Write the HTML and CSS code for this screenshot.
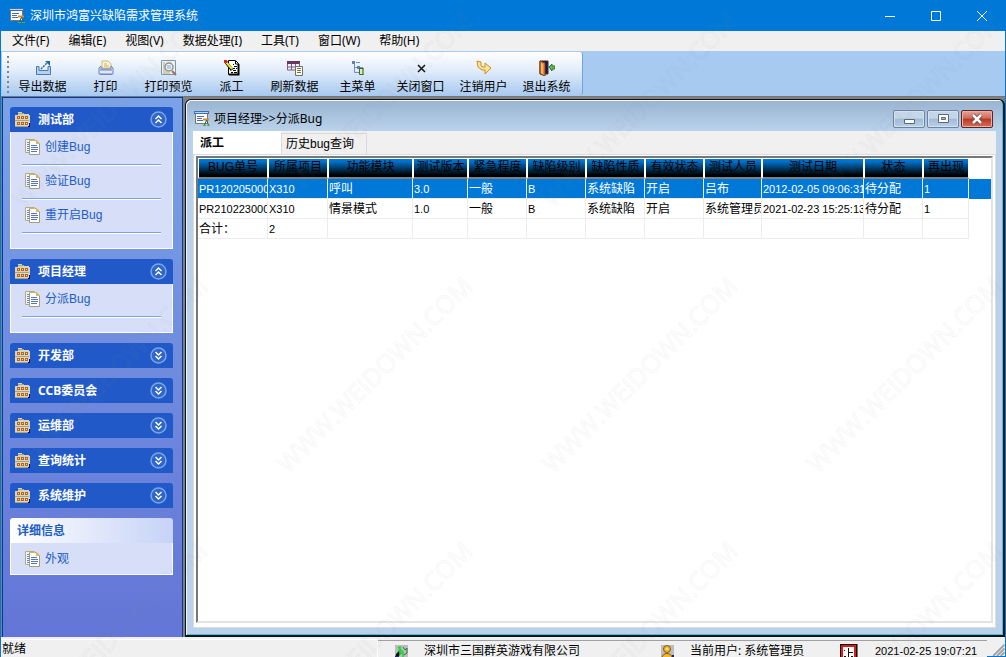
FILE: index.html
```html
<!DOCTYPE html>
<html lang="zh-CN">
<head>
<meta charset="utf-8">
<title>深圳市鸿富兴缺陷需求管理系统</title>
<link rel="stylesheet" href="styles.css">
</head>
<body>
<svg class="defs" aria-hidden="true">
  <symbol id="app" viewBox="0 0 16 16"><path d="M1.500 1.500h12v11h-12z" fill="#fff" stroke="#77786a"/><path d="M0 0h15v3H0z" fill="#3d6fb5"/><path d="M1 1.500h13" stroke="#b9d7f5"/><path d="M3 5.500h7M3 7.500h5M3 9.500h6" stroke="#4b6da3"/><path d="M9 8.500h6" stroke="#e08a2c" stroke-width="2"/><path d="M12.500 9l-2 5M12.500 9l2 5" stroke="#27666b"/><path d="M9 14.500h3M13 14.500h3" stroke="#60b030"/></symbol>
  <symbol id="building" viewBox="0 0 16 16"><path d="M3 0h4v2h2v0h5v1h1v12H0V3h3z" fill="#d9d5bb"/><path d="M3 1h6v1H3zM0 8h14v1H0zM0 14h14v1H0z" fill="#a9a58b"/><path d="M2 4h3v3H2zM6 4h3v3H6zM10 4h3v3h-3zM2 10h3v3H2zM6 10h3v3H6zM10 10h3v3h-3z" fill="#b9622c"/><path d="M3 5h1v1H3zM7 5h1v1H7zM11 5h1v1h-1zM3 11h1v1H3zM7 11h1v1H7zM11 11h1v1h-1z" fill="#ffe14a"/><path d="M14 11h1v4h-2v-1h1z" fill="#08086e"/></symbol>
  <symbol id="page" viewBox="0 0 16 16"><path d="M.5 13.500V.5h9l1 1v12z" fill="#eef3ff" stroke="#b9ab76"/><path d="M2 3.500h2M2 5.500h2M2 7.500h2M2 9.500h2M2 11.500h2" stroke="#6d89be"/><path d="M4.500 15.500v-14h7l3 3v11z" fill="#fff" stroke="#a09c88"/><path d="M4.500 1.500h6.500l3.500 3.500" fill="none" stroke="#cdb365"/><path d="M11 1v4h4z" fill="#e4b660"/><path d="M6 6.500h6M6 8.500h7M6 10.500h7M6 12.500h6" stroke="#5577b5"/></symbol>
  <symbol id="up" viewBox="0 0 17 17"><circle cx="8.500" cy="8.500" r="7.500" fill="#2f65cc" stroke="#7ba6e6" stroke-width="1.500"/><path d="M5.500 8l3-3 3 3M5.500 12l3-3 3 3" fill="none" stroke="#fff" stroke-width="1.500"/></symbol>
  <symbol id="down" viewBox="0 0 17 17"><circle cx="8.500" cy="8.500" r="7.500" fill="#2f65cc" stroke="#7ba6e6" stroke-width="1.500"/><path d="M5.500 5l3 3 3-3M5.500 9l3 3 3-3" fill="none" stroke="#fff" stroke-width="1.500"/></symbol>
</svg>

<header class="titlebar">
  <svg class="ic16"><use href="#app"/></svg>
  <h1 class="title">深圳市鸿富兴缺陷需求管理系统</h1>
  <div class="caption">
    <button class="cap-btn" aria-label="最小化"><svg class="ic10" viewBox="0 0 10 10"><path d="M0 5.500h10"/></svg></button>
    <button class="cap-btn" aria-label="最大化"><svg class="ic10" viewBox="0 0 10 10"><path d="M.5.5h9v9h-9z"/></svg></button>
    <button class="cap-btn" aria-label="关闭"><svg class="ic10" viewBox="0 0 10 10"><path d="M0 0l10 10M10 0L0 10"/></svg></button>
  </div>
</header>

<nav class="menubar">
  <button>文件(F)</button><button>编辑(E)</button><button>视图(V)</button><button>数据处理(I)</button><button>工具(T)</button><button>窗口(W)</button><button>帮助(H)</button>
</nav>

<div class="toolstrip">
  <div class="toolbar">
    <span class="grip"></span>
    <button><svg class="ic16" viewBox="0 0 16 16"><path d="M3 6.500H1.500v8h14v-8H13v4H4v-4z" fill="#b4d2ee" stroke="#4f78ae"/><path d="M6 9l7-7" stroke="#2b6a9d" stroke-width="1.500" stroke-dasharray="2 1"/><path d="M10 1h5v5z" fill="#23689b"/></svg>导出数据</button>
    <button><svg class="ic16" viewBox="0 0 16 16"><path d="M4 8V1h6l3 3v4z" fill="#fff3d2" stroke="#d3b878"/><path d="M6 4h3M6 6h5" stroke="#c9b27c"/><path d="M1 8l2-2v3h10V6l2 2v6H1z" fill="#dce7f8" stroke="#6f85b8"/><path d="M2 10h12M2 14.500h12" stroke="#7187bd"/></svg>打印</button>
    <button><svg class="ic16" viewBox="0 0 16 16"><path d="M.5.5h14v14H.5z" fill="#eaf1f4" stroke="#7b98a8"/><path d="M2 3h2M2 5h2M2 7h2M2 9h2M2 11h5M2 13h7" stroke="#b8aa80"/><circle cx="8" cy="7" r="4" fill="#e8f4fc" stroke="#98917e" stroke-width="1.500"/><path d="M6 6h4M6 8h4" stroke="#7ea7d4"/><path d="M11 11l4 4" stroke="#b06a5a" stroke-width="2"/></svg>打印预览</button>
    <button><svg class="ic16" viewBox="0 0 16 16"><path d="M4.500.5h7l3 3v11h-10z" fill="#fff" stroke="#000"/><path d="M14.500 4v10.500H5" stroke="#000" stroke-width="2"/><path d="M11.500 1v3h3M9 4.500h1M10 6.500h3M9 8.500h2M12 8.500h1M9 10.500h3M7 12.500h2M10 12.500h3" stroke="#000"/><path d="M2 2l6 8" stroke="#000" stroke-width="3"/><path d="M2 2l6 7" stroke="#f6e51a" stroke-width="2"/><path d="M0 0h3v3H0z" fill="#e11b1b"/></svg>派工</button>
    <button><svg class="ic16" viewBox="0 0 16 16"><path d="M0 1h13v3H0z" fill="#633a5b"/><path d="M.5 4v6H8M12.500 3v4M.5 7h11M4.500 4v6M8.500 4v6" fill="none" stroke="#875b7d"/><path d="M8.500 6.500h7v9h-7z" fill="#fffde8" stroke="#6d7462"/><path d="M10 8.500h4M10 10.500h4M10 12.500h4" stroke="#6d7462"/></svg>刷新数据</button>
    <button><svg class="ic16" viewBox="0 0 16 16"><path d="M4.500 4v8.500H10M5 7.500h4M6 2.500h4M10 7.500h3" fill="none" stroke="#6f8fbd"/><path d="M2.500 1.500h2v2h-2zM7.500 6.500h2v2h-2z" fill="#7397ca" stroke="#52719c"/><path d="M9.500 8.500h4v6h-4z" fill="#dcecc0" stroke="#47623c"/><path d="M12 9h2v5h-2z" fill="#79ac5a"/></svg>主菜单</button>
    <button><svg class="ic16" viewBox="0 0 16 16"><path d="M5 5l7 7M12 5l-7 7" stroke="#111" stroke-width="1.500"/></svg>关闭窗口</button>
    <button><svg class="ic16" viewBox="0 0 16 16"><path d="M1 1l4 1v4l2 1h2V3l6 5-6 6v-4H6L2 7z" fill="#ffe391" stroke="#c98e2d"/></svg>注销用户</button>
    <button><svg class="ic16" viewBox="0 0 16 16"><path d="M1 1h8v13H1z" fill="#101560" stroke="#4c2811"/><path d="M1 1l5 2v13l-5-2z" fill="#e38b3b" stroke="#7f3b13"/><path d="M2 3l2 1v10l-2-1z" fill="#f8b05f"/><path d="M10 7l3-3v2h3v3h-3v2z" fill="#63bb4c" stroke="#28752b"/></svg>退出系统</button>
  </div>
</div>

<main class="work">
  <aside class="side">
    <section class="panel">
      <button class="head"><svg class="ic16"><use href="#building"/></svg><span>测试部</span><svg class="ic17"><use href="#up"/></svg></button>
      <div class="list"><a href="#create"><svg class="ic16"><use href="#page"/></svg>创建Bug</a><a href="#verify"><svg class="ic16"><use href="#page"/></svg>验证Bug</a><a href="#reopen"><svg class="ic16"><use href="#page"/></svg>重开启Bug</a></div>
    </section>
    <section class="panel">
      <button class="head"><svg class="ic16"><use href="#building"/></svg><span>项目经理</span><svg class="ic17"><use href="#up"/></svg></button>
      <div class="list"><a href="#assign"><svg class="ic16"><use href="#page"/></svg>分派Bug</a></div>
    </section>
    <button class="head"><svg class="ic16"><use href="#building"/></svg><span>开发部</span><svg class="ic17"><use href="#down"/></svg></button>
    <button class="head"><svg class="ic16"><use href="#building"/></svg><span>CCB委员会</span><svg class="ic17"><use href="#down"/></svg></button>
    <button class="head"><svg class="ic16"><use href="#building"/></svg><span>运维部</span><svg class="ic17"><use href="#down"/></svg></button>
    <button class="head"><svg class="ic16"><use href="#building"/></svg><span>查询统计</span><svg class="ic17"><use href="#down"/></svg></button>
    <button class="head"><svg class="ic16"><use href="#building"/></svg><span>系统维护</span><svg class="ic17"><use href="#down"/></svg></button>
    <section class="panel info">
      <h2 class="head light">详细信息</h2>
      <div class="list"><a href="#look"><svg class="ic16"><use href="#page"/></svg>外观</a></div>
    </section>
  </aside>

  <section class="child">
    <header class="child-title">
      <svg class="ic16"><use href="#app"/></svg>
      <h2 class="title">项目经理&gt;&gt;分派Bug</h2>
      <div class="child-caption">
        <button aria-label="最小化"><svg class="ic16" viewBox="0 0 16 16"><path d="M3.500 8.500h10v4h-10z" fill="#fff" stroke="#59697c"/></svg></button>
        <button aria-label="还原"><svg class="ic16" viewBox="0 0 16 16"><path d="M3.500 3.500h10v8h-10z" fill="#fff" stroke="#59697c"/><path d="M6.500 6.500h4v2h-4z" fill="#aac3df" stroke="#59697c"/></svg></button>
        <button class="close" aria-label="关闭"><svg class="ic16" viewBox="0 0 16 16"><path d="M4 4l8 8M12 4l-8 8" stroke="#5c3b40" stroke-width="4"/><path d="M4 4l8 8M12 4l-8 8" stroke="#fff" stroke-width="2.500"/></svg></button>
      </div>
    </header>
    <div class="client">
      <div class="tabs" role="tablist">
        <button class="tab active" role="tab" aria-selected="true">派工</button>
        <button class="tab" role="tab" aria-selected="false">历史bug查询</button>
      </div>
      <div class="sheet">
        <div class="grid">
          <table>
            <colgroup><col class="w70"><col class="w60"><col class="w85"><col class="w55"><col class="w59"><col class="w59"><col class="w59"><col class="w59"><col class="w58"><col class="w102"><col class="w59"><col class="w46"><col></colgroup>
            <thead><tr><th>BUG单号</th><th>所属项目</th><th>功能模块</th><th>测试版本</th><th>紧急程度</th><th>缺陷级别</th><th>缺陷性质</th><th>有效状态</th><th>测试人员</th><th>测试日期</th><th>状态</th><th>再出现</th><td></td></tr></thead>
            <tbody>
              <tr class="selected"><td>PR120205000</td><td>X310</td><td>呼叫</td><td>3.0</td><td>一般</td><td>B</td><td>系统缺陷</td><td>开启</td><td>吕布</td><td>2012-02-05 09:06:31</td><td>待分配</td><td>1</td><td></td></tr>
              <tr><td>PR210223000</td><td>X310</td><td>情景模式</td><td>1.0</td><td>一般</td><td>B</td><td>系统缺陷</td><td>开启</td><td>系统管理员</td><td>2021-02-23 15:25:13</td><td>待分配</td><td>1</td><td></td></tr>
              <tr><td>合计：</td><td>2</td><td></td><td></td><td></td><td></td><td></td><td></td><td></td><td></td><td></td><td></td><td></td></tr>
            </tbody>
          </table>
        </div>
      </div>
    </div>
  </section>
</main>

<footer class="status">
  <div class="ready">就绪</div>
  <div class="cell company"><svg class="ic16" viewBox="0 0 16 16"><path d="M1 1h13v15H1z" fill="#bdbdbd"/><path d="M2 10l3-3 2 2-4 6H1z" fill="#111"/><path d="M4 3l5 5v6M6 2v9M4 6l6 5" stroke="#20d33a" stroke-width="1.500" fill="none"/><path d="M9 3l2 3 2-2v5l-3 2" stroke="#2b7048" fill="none"/><path d="M1 12h4v3H1z" fill="#152b73"/></svg>深圳市三国群英游戏有限公司</div>
  <div class="cell user"><svg class="ic16" viewBox="0 0 16 16"><path d="M1 1h13v15H1z" fill="#bdbdbd"/><circle cx="7" cy="5" r="3.500" fill="#f5b72e" stroke="#8a5710"/><path d="M2 14c0-6 10-6 10 0z" fill="#f5b72e" stroke="#8a5710"/><path d="M6 4h2v2H6z" fill="#fff1a0"/><path d="M12 11h2v5h-2z" fill="#1c2068"/></svg>当前用户: 系统管理员</div>
  <div class="cell clock"><svg class="ic18" viewBox="0 0 18 16"><path d="M0 0h18v16H0z" fill="#777"/><path d="M0 0h17v16H0z" fill="#111"/><path d="M2 2h13v13H2z" fill="#fff" stroke="#e01818" stroke-width="2"/><path d="M8.500 4v9M8 8.500h5M4 6.500h1M4 12.500h2M11 12.500h2" stroke="#111"/></svg>2021-02-25 19:07:21</div>
  <svg class="resize" viewBox="0 0 18 16"><path d="M6 16L18 4M10 16l8-8M14 16l4-4" stroke="#a2a2a2" stroke-width="2"/></svg>
</footer>

<svg class="watermark" aria-hidden="true">
  <defs><pattern id="wm" x="242" y="242" width="265" height="265" patternUnits="userSpaceOnUse"><text class="wm-text" x="132" y="142" text-anchor="middle" transform="rotate(-45 132 132)">WWW.WEIDOWN.COM</text></pattern></defs>
  <rect width="100%" height="100%" fill="url(#wm)"/>
</svg>
</body>
</html>
```
FILE: styles.css
```css
* { box-sizing: border-box; }
body {
  margin: 0;
  height: 100vh;
  display: flex;
  flex-direction: column;
  overflow: hidden;
  border-left: 1px solid #0078d7;
  border-right: 1px solid #0078d7;
  background: #f0f0f0;
  color: #000;
  font: 12px/16px "Noto Sans", "Noto Sans CJK SC", sans-serif;
}
button {
  margin: 0;
  padding: 0;
  border: 0;
  background: none;
  color: inherit;
  font: inherit;
  white-space: nowrap;
}
h1, h2 { margin: 0; font-size: 12px; font-weight: 400; }
a { color: inherit; text-decoration: none; }
svg { flex: none; fill: none; }
.defs { position: absolute; width: 0; height: 0; }
.ic10 { width: 10px; height: 10px; stroke: #fff; }
.ic16 { width: 16px; height: 16px; }
.ic17 { width: 17px; height: 17px; }
.ic18 { width: 18px; height: 16px; }

.titlebar {
  flex: none;
  display: flex;
  align-items: center;
  gap: 5px;
  height: 31px;
  padding-left: 8px;
  background: #0078d7;
  color: #fff;
}
.title { flex: 1; white-space: nowrap; }
.caption { display: flex; height: 100%; }
.cap-btn { width: 46px; display: grid; place-items: center; }

.menubar {
  flex: none;
  display: flex;
  gap: 19px;
  height: 20px;
  padding-left: 11px;
}

.toolstrip {
  flex: none;
  height: 45px;
  display: flex;
  padding: 1px 0 1px 1px;
  background: #a6caf0;
}
.toolbar {
  display: flex;
  padding: 0 4px 0 5px;
  border-right: 1px solid #6fa5df;
  border-radius: 0 3px 3px 0;
  background: linear-gradient(#fff, #e4eefb 40%, #a9caf0);
}
.toolbar button {
  width: 63px;
  padding-top: 8px;
  display: flex;
  flex-direction: column;
  align-items: center;
  gap: 3px;
}
.grip {
  width: 2px;
  margin: 4px 2px 2px 0;
  background: repeating-linear-gradient(#858585 0 2px, transparent 2px 5px);
}

.work {
  flex: 1;
  min-height: 0;
  display: flex;
  gap: 2px;
  padding-left: 1px;
  border-top: 1px solid #777;
  background: #808080;
}
.side {
  flex: none;
  width: 181px;
  display: flex;
  flex-direction: column;
  gap: 10px;
  padding: 9px 9px 0 7px;
  border: 1px solid #003c9d;
  border-bottom: 0;
  background: linear-gradient(#7ba2e7, #6375d6);
}
.head {
  flex: none;
  display: flex;
  align-items: center;
  gap: 6px;
  width: 100%;
  height: 25px;
  padding: 0 6px 0 5px;
  border-radius: 3px 3px 0 0;
  background: #215ac8;
  color: #fff;
  font-size: 12px;
  font-weight: 700;
  text-align: left;
}
.head span { flex: 1; padding-left: 1px; }
.light { padding-left: 7px; background: linear-gradient(90deg, #fff, #c6d3f7); color: #215dc6; }
.list {
  padding: 0 11px 14px;
  border: 1px solid #fff;
  border-top: 0;
  background: #d6dff7;
  font-family: "Liberation Sans", "Noto Sans CJK SC", sans-serif;
}
.list a {
  display: flex;
  align-items: center;
  gap: 4px;
  height: 34px;
  padding: 0 3px 4px;
  border-bottom: 1px solid #fff;
  box-shadow: inset 0 -1px #7ba2e7;
  color: #215dc6;
}
.info .list { padding-bottom: 0; }
.info .list a { height: 31px; padding-bottom: 0; border: 0; box-shadow: none; }

.child {
  flex: 1;
  min-width: 0;
  display: flex;
  flex-direction: column;
  margin-top: 2px;
  padding: 0 7px 7px;
  border: 1px solid #111;
  border-width: 1px 2px 2px 1px;
  border-radius: 6px 6px 0 0;
  background: linear-gradient(#99b4d1, #b9d1ea 30px, #b9d1ea);
  box-shadow: inset 1px 1px #f4f8fc, inset -1px -1px #35c5e8;
}
.child-title {
  flex: none;
  display: flex;
  align-items: center;
  gap: 4px;
  height: 31px;
  padding: 6px 3px 0 1px;
}
.child-caption { display: flex; gap: 2px; }
.child-caption button {
  display: grid;
  place-items: center;
  width: 32px;
  height: 18px;
  border: 1px solid #6f839d;
  border-radius: 2px;
  background: linear-gradient(#c5d6e9 45%, #a2bad5 50%, #b8d0ea);
  box-shadow: inset 0 0 0 1px #d3e1f0;
}
.child-caption .close {
  border-color: #5f2229;
  background: linear-gradient(#e5a598, #cf6a56 45%, #b93722 50%, #d5705a);
  box-shadow: inset 0 0 0 1px #e7b0a5;
}
.client { flex: 1; min-height: 0; display: flex; flex-direction: column; background: #f0f0f0; }
.tabs { flex: none; display: flex; height: 23px; font-family: "Liberation Sans", "Noto Sans CJK SC", sans-serif; }
.tab {
  margin-top: 2px;
  padding: 0 12px 0 4px;
  border: 1px solid #d9d9d9;
  border-bottom: 0;
}
.active { width: 88px; margin-top: 0; padding: 0 7px; border: 0; background: #fff; font-weight: 700; text-align: left; }
.sheet {
  flex: 1;
  min-height: 0;
  display: flex;
  padding: 1px 2px 4px;
  border: 1px solid #dcdcdc;
  background: #fff;
}
.grid {
  flex: 1;
  min-width: 0;
  border: 2px solid #696969;
  border-color: #777 #e3e3e3 #e3e3e3 #777;
  background: #fff;
}
table {
  width: 100%;
  table-layout: fixed;
  border-collapse: separate;
  border-spacing: 0;
  font: 11px/16px "Liberation Sans", "Noto Sans CJK SC", sans-serif;
}
th, td { height: 20px; padding: 0 0 0 1px; overflow: hidden; white-space: nowrap; text-align: left; font-weight: 400; }
th {
  height: 21px;
  padding: 0 0 2px;
  border: 1px solid #fff;
  border-bottom: 2px solid #808080;
  background: linear-gradient(#0078d7, #0070c8 15%, #000 90%) padding-box;
  font-size: 12px;
  text-align: center;
}
tbody td { border-right: 1px solid #ececec; border-bottom: 1px solid #ececec; }
tbody td:last-child { border-color: transparent; }
td:nth-child(3), td:nth-child(5), td:nth-child(7), td:nth-child(8), td:nth-child(9), td:nth-child(11), tr:last-child td:first-child { font-size: 12px; }
tbody tr:nth-child(2) td:first-child { font-size: 11px; }
.selected td { background: #0078d7; color: #fff; }
.w70 { width: 70px; }
.w60 { width: 60px; }
.w85 { width: 85px; }
.w55 { width: 55px; }
.w59 { width: 59px; }
.w58 { width: 58px; }
.w102 { width: 102px; }
.w46 { width: 46px; }

.status {
  flex: none;
  display: grid;
  grid-template-columns: 1fr 266px 180px 163px 18px;
  height: 20px;
  padding-top: 2px;
  line-height: 14px;
}
.ready { padding: 2px 1px; border-top: 1px solid #fff; border-right: 1px solid #fff; border-bottom: 1px solid #0078d7; }
.cell {
  display: flex;
  align-items: flex-start;
  gap: 14px;
  height: 17px;
  margin-top: 1px;
  padding: 3px 0 0 16px;
  border-top: 1px solid #a0a0a0;
  white-space: nowrap;
}
.clock { gap: 17px; font: 11px/14px "Liberation Sans", sans-serif; }
.resize { width: 18px; height: 16px; margin-top: 2px; border-bottom: 1px solid #0078d7; }

.watermark {
  position: absolute;
  inset: 0;
  width: 100%;
  height: 100%;
  pointer-events: none;
}
.wm-text {
  font: 25px "Open Sans", sans-serif;
  fill: none;
  stroke: #808080;
  stroke-opacity: .07;
  stroke-width: 1px;
}
```
